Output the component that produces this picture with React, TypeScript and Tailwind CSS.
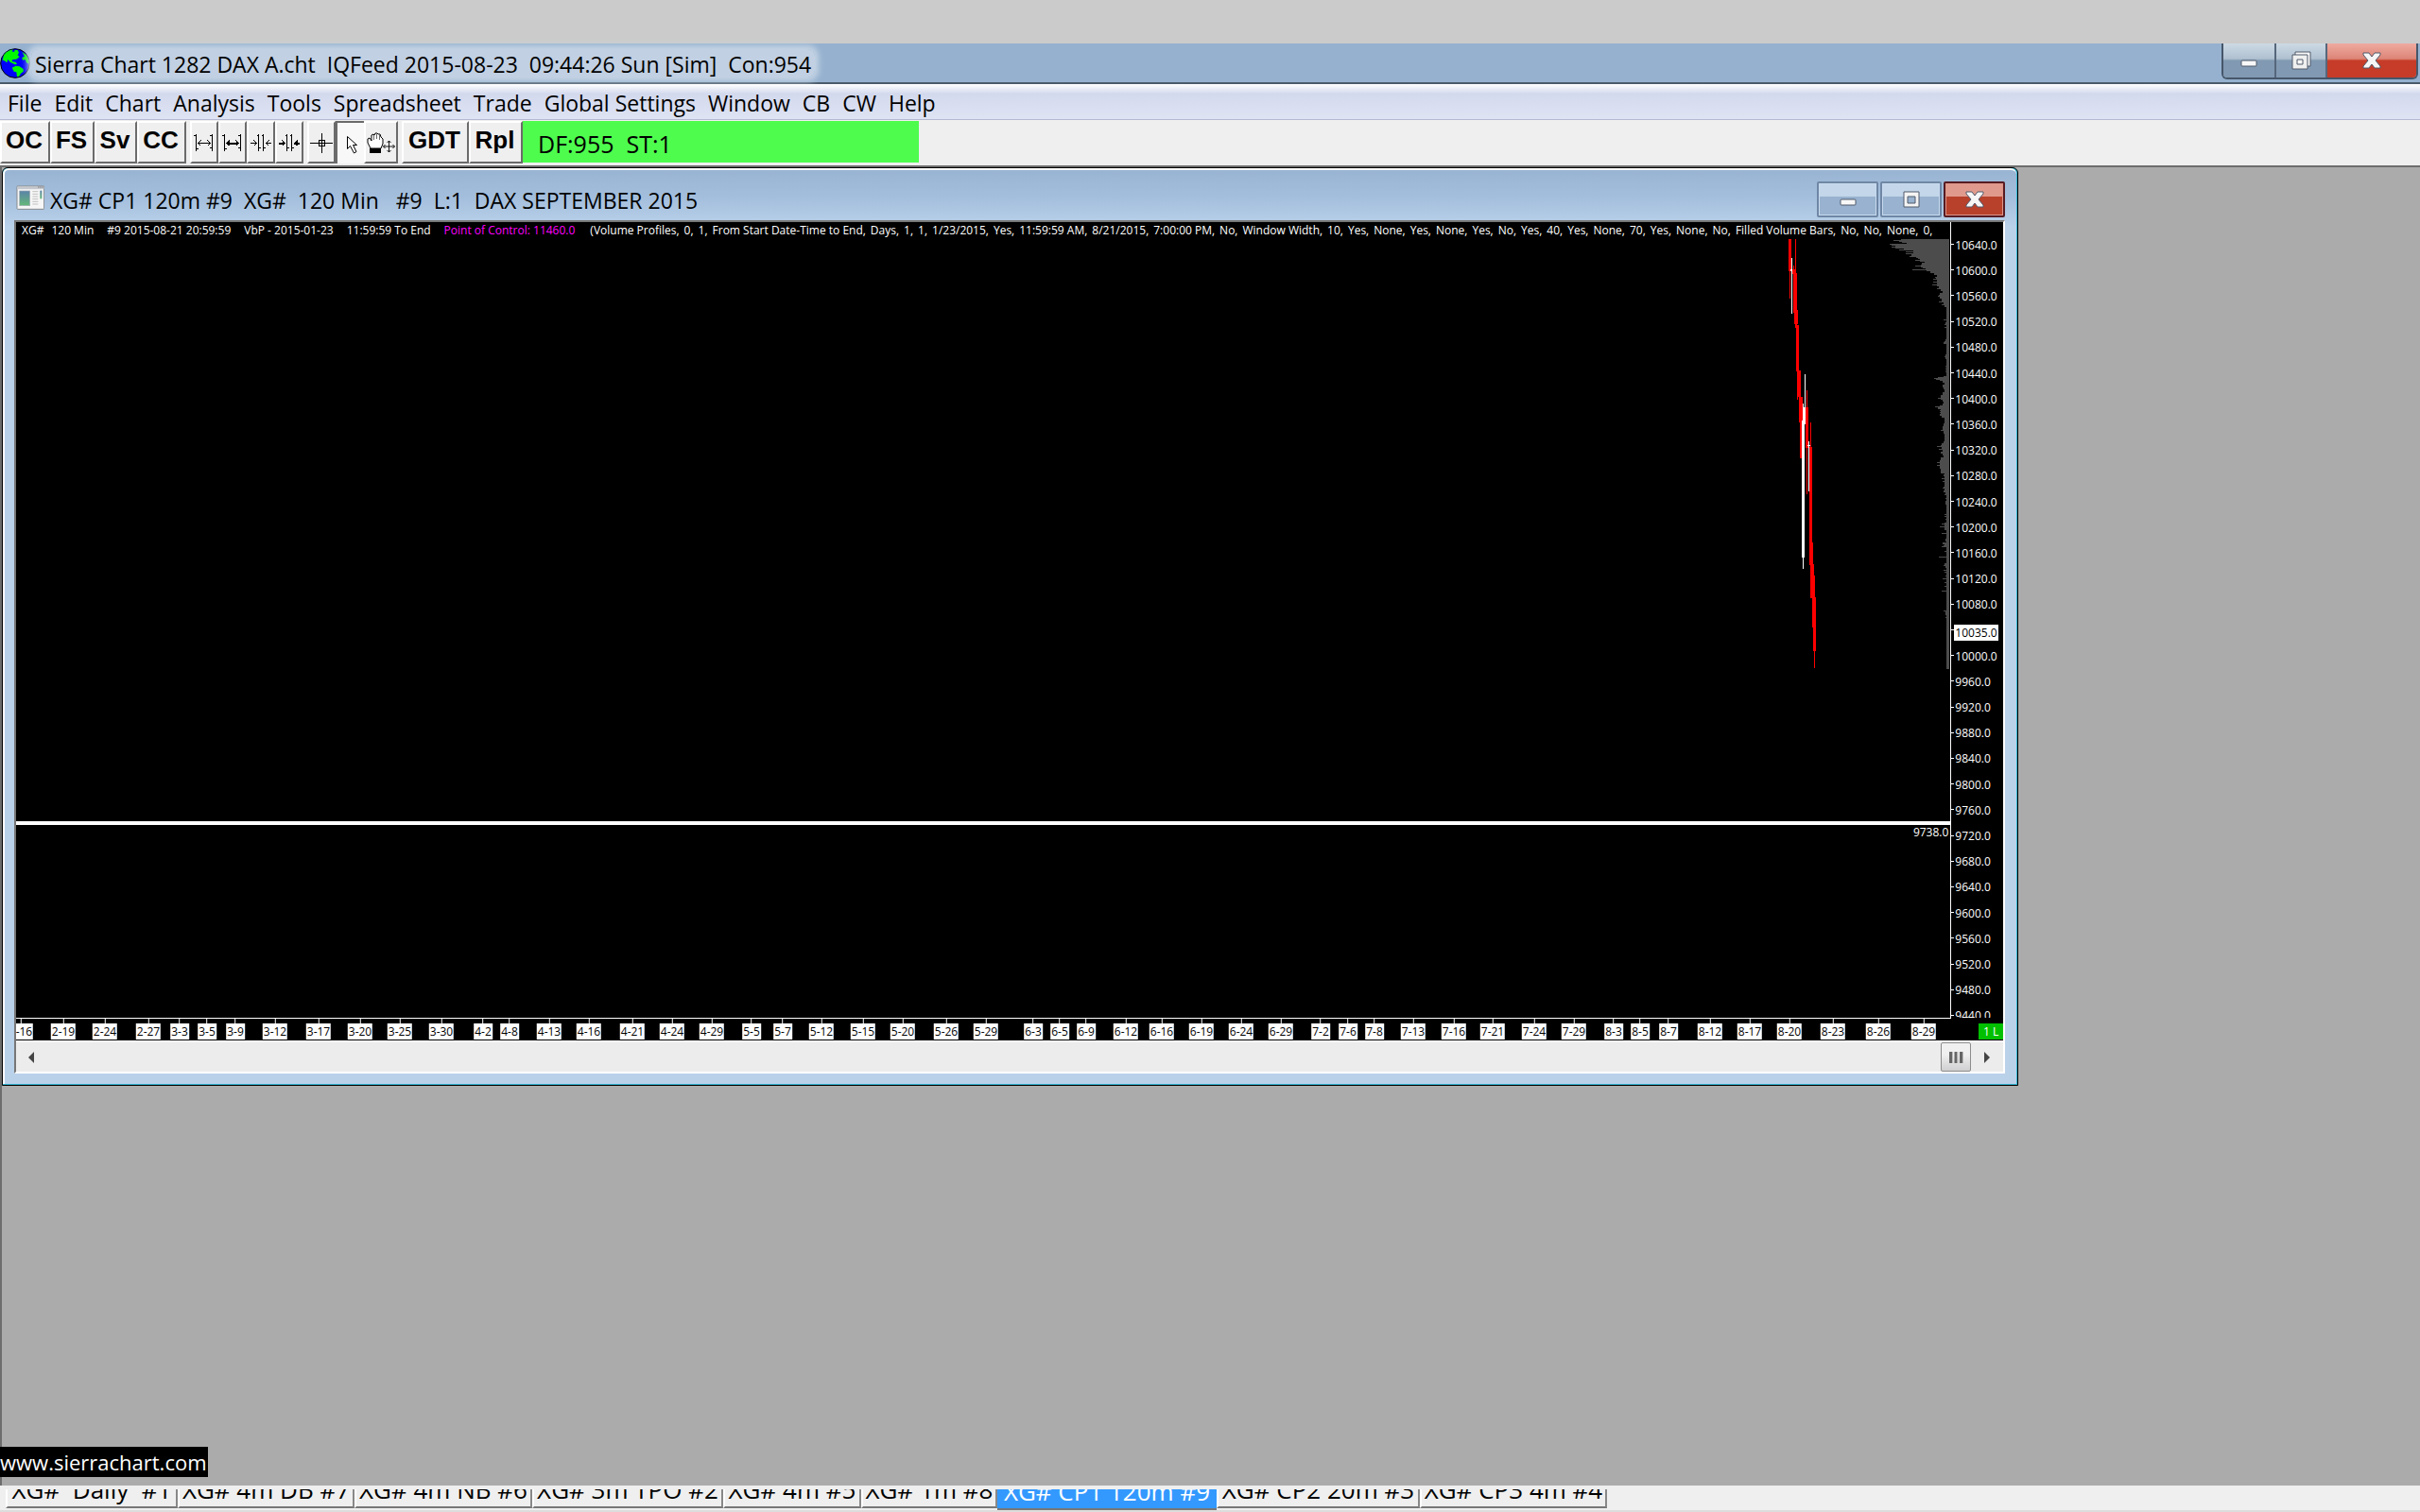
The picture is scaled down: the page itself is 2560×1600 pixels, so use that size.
import React from 'react';

const menus = ['File', 'Edit', 'Chart', 'Analysis', 'Tools', 'Spreadsheet', 'Trade', 'Global Settings', 'Window', 'CB', 'CW', 'Help'];

const prices = Array.from({ length: 31 }, (_, i) => 10640 - i * 40);

const studyInputs =
  '(Volume Profiles, 0, 1, From Start Date-Time to End, Days, 1, 1, 1/23/2015, Yes, 11:59:59 AM, 8/21/2015, 7:00:00 PM, No, Window Width, 10, Yes, None, Yes, None, Yes, No, Yes, 40, Yes, None, 70, Yes, None, No, Filled Volume Bars, No, No, None, 0,'.split(/(?<=,) /);

// Centre of every date label along the time axis, in pixels from the plot's left edge.
const dates: [string, number][] = [
  ['2-16', 5], ['2-19', 50], ['2-24', 94], ['2-27', 140], ['3-3', 173], ['3-5', 202], ['3-9', 232], ['3-12', 274],
  ['3-17', 320], ['3-20', 364], ['3-25', 406], ['3-30', 450], ['4-2', 494], ['4-8', 522], ['4-13', 564], ['4-16', 606],
  ['4-21', 652], ['4-24', 694], ['4-29', 736], ['5-5', 778], ['5-7', 811], ['5-12', 852], ['5-15', 896], ['5-20', 938],
  ['5-26', 984], ['5-29', 1026], ['6-3', 1076], ['6-5', 1104], ['6-9', 1132], ['6-12', 1174], ['6-16', 1212], ['6-19', 1254],
  ['6-24', 1296], ['6-29', 1338], ['7-2', 1380], ['7-6', 1409], ['7-8', 1437], ['7-13', 1478], ['7-16', 1521], ['7-21', 1562],
  ['7-24', 1606], ['7-29', 1648], ['8-3', 1690], ['8-5', 1718], ['8-7', 1748], ['8-12', 1792], ['8-17', 1834], ['8-20', 1876],
  ['8-23', 1922], ['8-26', 1970], ['8-29', 2018],
];

const tabs = ['XG#  Daily  #1', 'XG# 4m DB #7', 'XG# 4m NB #6', 'XG# 3m TPO #2', 'XG# 4m #5', 'XG# 1m #8', 'XG# CP1 120m #9', 'XG# CP2 20m #3', 'XG# CP3 4m #4'];
const tabWidths = ['w-[182px]', 'w-[187px]', 'w-[188px]', 'w-[202px]', 'w-[146px]', 'w-[144px]', 'w-[232px]', 'w-[215px]', 'w-[198px]'];

// [top, left edge] steps of the volume profile; each step holds until the next one.
const profile: [number, number][] = [
  [66, 452], [69, 430], [72, 448], [75, 456], [78, 470], [81, 417], [84, 423], [87, 436], [90, 424], [93, 434], [96, 462], [99, 447], [102, 492],
  [105, 468], [108, 492], [111, 468], [114, 487], [120, 480], [123, 500], [126, 508], [129, 514], [132, 498], [135, 512], [138, 528], [141, 520],
  [147, 517], [150, 498], [153, 517], [156, 522], [159, 532], [162, 489], [165, 535], [168, 545], [174, 557], [180, 567], [186, 560], [189, 565],
  [192, 555], [195, 567], [201, 555], [204, 567], [210, 552], [213, 566], [216, 572], [222, 568], [225, 578], [231, 585], [237, 576], [243, 573],
  [246, 570], [249, 577], [255, 583], [264, 573], [267, 588], [273, 583], [276, 592], [282, 597], [321, 588], [324, 597], [330, 593], [336, 590],
  [339, 597], [345, 591], [348, 597], [384, 594], [390, 590], [393, 588], [399, 597], [432, 594], [438, 591], [441, 594], [447, 597], [468, 594],
  [471, 597], [474, 594], [477, 597], [480, 594], [483, 597], [486, 594], [489, 597], [501, 588], [504, 570], [507, 558], [510, 564], [513, 575],
  [516, 586], [522, 590], [528, 586], [537, 588], [543, 590], [552, 585], [561, 580], [567, 578], [570, 570], [573, 578], [576, 586], [582, 588],
  [588, 585], [594, 576], [597, 561], [600, 570], [606, 580], [609, 576], [612, 580], [615, 576], [618, 580], [621, 576], [627, 582], [633, 590],
  [642, 592], [651, 588], [660, 586], [672, 579], [675, 588], [684, 590], [696, 592], [708, 588], [714, 583], [720, 579], [723, 567], [726, 582],
  [732, 572], [735, 585], [741, 579], [747, 584], [753, 588], [759, 580], [768, 576], [774, 567], [777, 575], [783, 567], [786, 576], [795, 580],
  [810, 592], [813, 588], [819, 591], [825, 582], [828, 590], [834, 585], [837, 591], [852, 588], [855, 584], [858, 591], [864, 588], [870, 594],
  [876, 591], [879, 597], [888, 594], [891, 597], [897, 594], [909, 597], [939, 590], [942, 597], [945, 592], [948, 597], [954, 594], [957, 597],
  [966, 590], [969, 583], [972, 590], [978, 576], [981, 591], [990, 597], [999, 582], [1002, 597], [1017, 594], [1026, 597], [1029, 585],
  [1035, 590], [1038, 588], [1041, 582], [1044, 597], [1056, 591], [1059, 597], [1074, 573], [1077, 597], [1095, 591], [1101, 588], [1104, 594],
  [1110, 597], [1116, 588], [1119, 597], [1122, 590], [1125, 597], [1134, 594], [1137, 597], [1143, 585], [1146, 597], [1155, 590], [1158, 597],
  [1167, 590], [1170, 597], [1182, 582], [1185, 597], [1245, 588], [1248, 594], [1260, 597], [1266, 594], [1269, 597],
];

const profilePath = `M606 66${profile.map(([y, x], i) => `V${y}H${x}V${i + 1 < profile.length ? profile[i + 1][0] : 1431}`).join('')}H606Z`;

// Candle bodies and wicks as [x, y, width, height].
const redBars: number[][] = [
  [96, 66, 9, 102], [99, 168, 3, 87], [108, 162, 12, 15], [111, 150, 3, 12], [117, 66, 3, 108], [111, 174, 12, 126], [114, 291, 12, 45],
  [117, 336, 6, 12], [120, 339, 9, 147], [123, 483, 12, 84], [123, 567, 3, 9], [129, 567, 12, 81], [132, 648, 6, 114], [150, 600, 9, 129],
  [153, 546, 3, 330], [162, 726, 9, 375], [165, 648, 3, 78], [165, 1029, 9, 177], [168, 1098, 9, 108], [171, 1134, 9, 165],
  [174, 1203, 9, 171], [177, 1374, 3, 54],
];
const whiteBars: number[][] = [
  [105, 126, 3, 177], [102, 162, 6, 6], [138, 642, 9, 435], [141, 588, 3, 525], [141, 600, 9, 42], [147, 495, 3, 159],
  [159, 708, 3, 159], [156, 720, 9, 3],
];

function Bars({ bars, fill }: { bars: number[][]; fill: string }) {
  return (
    <g fill={fill}>
      {bars.map(([x, y, w, h]) => <rect key={`${x}-${y}`} x={x} y={y} width={w} height={h} />)}
    </g>
  );
}

function Globe() {
  return (
    <svg className="h-8 w-8 shrink-0" viewBox="0 0 96 96" aria-hidden="true">
      <circle cx="48" cy="48" r="46" fill="#0000f8" stroke="#000" strokeWidth="3" />
      <path d="M12 22L20 13 34 5H42L37 10 45 12 47 6 56 6 60 14 56 22 62 28 52 35 40 36 38 42 50 44 54 50 48 52 40 48 33 45 25 36 22 46 14 40 8 38Z" fill="#00f800" />
      <path d="M38 62L50 56 62 58 74 66 74 74 66 80 60 90 54 90 52 76 44 74Z" fill="#00f800" />
      <path d="M70 12L84 22 92 38 92 50 84 46 80 36 72 38 70 30 78 26Z" fill="#00f800" />
    </svg>
  );
}

function WindowIcon() {
  return (
    <svg className="ml-0.5 h-[26px] w-[30px] shrink-0" viewBox="0 0 90 78" aria-hidden="true">
      <defs>
        <linearGradient id="pane" x1="0" y1="0" x2="0" y2="1">
          <stop offset="0" stopColor="#5b83a8" />
          <stop offset="1" stopColor="#64b878" />
        </linearGradient>
      </defs>
      <rect x="3" y="3" width="86" height="73" rx="2" fill="#f6f6f6" stroke="#85888c" strokeWidth="3" />
      <path d="M3 9H88" stroke="#c4c8ce" strokeWidth="7" />
      <path d="M70 6h3m3 0h3m3 0h3" stroke="#555" strokeWidth="3" />
      <rect x="11" y="18" width="33" height="47" fill="url(#pane)" stroke="#a4adb8" strokeWidth="2" />
      <path d="M52 20H70M52 28H70M52 36H70M52 44H70M52 52H70M52 60H70" stroke="#c0c0c0" strokeWidth="3" />
      <rect x="76" y="17" width="6" height="26" fill="url(#pane)" />
    </svg>
  );
}

function MinimizeGlyph() {
  return (
    <svg className="h-6 w-6" viewBox="0 0 24 24" aria-hidden="true">
      <rect x="4" y="12" width="16" height="6" rx="1" fill="#f8f8f8" stroke="#515a6b" strokeWidth="1" />
    </svg>
  );
}
function MaximizeGlyph() {
  return (
    <svg className="h-6 w-6" viewBox="0 0 24 24" aria-hidden="true">
      <path fillRule="evenodd" d="M4 4h16v16H4zM8 9h8v7H8z" fill="#f4f4f4" stroke="#515a6b" strokeWidth="1" />
    </svg>
  );
}
function RestoreGlyph() {
  return (
    <svg className="h-6 w-6" viewBox="0 0 24 24" aria-hidden="true">
      <path d="M6 3h16v15H6z" fill="#f8f8f8" stroke="#515a6b" strokeWidth="1" />
      <path fillRule="evenodd" d="M3 6h16v15H3zM8 11h6v5H8z" fill="#f0f0f0" stroke="#515a6b" strokeWidth="1" />
    </svg>
  );
}
function CloseGlyph() {
  return (
    <svg className="h-6 w-6" viewBox="0 0 24 24" aria-hidden="true">
      <path d="M3 4h6l3 4 3-4h6v2l-5 6 5 6v2h-6l-3-4-3 4H3v-2l5-6-5-6z" fill="#f6f6f6" stroke="#515a6b" strokeWidth="1" />
    </svg>
  );
}

function BarSpacing({ kind }: { kind: number }) {
  return (
    <svg className="h-6 w-6" viewBox="0 0 24 24" fill="none" stroke="#000" strokeWidth="1" shapeRendering="crispEdges" aria-hidden="true">
      {kind < 2 ? (
        <>
          <path d="M1 4.500h2M3.500 3v18M4 18.500h2M18 4.500h2M20.500 3v18M18 17.500h2" />
          <path d="M6 12.500h12" strokeWidth={kind === 1 ? 2 : 1} />
          <path d="M8.500 9.500l-3 3 3 3M15.500 9.500l3 3-3 3" fill={kind === 1 ? '#000' : 'none'} />
        </>
      ) : (
        <>
          <path d="M8 4.500h2M9.500 3v18M10 17.500h2M13 4.500h2M14.500 3v18M15 17.500h2" />
          <path d="M1 12.500h6M17 12.500h6" strokeWidth={kind === 3 ? 2 : 1} />
          <path d="M4.500 9.500l3 3-3 3M20.500 9.500l-3 3 3 3" fill={kind === 3 ? '#000' : 'none'} />
        </>
      )}
    </svg>
  );
}

function Crosshair() {
  return (
    <svg className="h-6 w-6" viewBox="0 0 24 24" fill="none" stroke="#000" shapeRendering="crispEdges" aria-hidden="true">
      <path d="M0 12.500h24M12.500 2v21" />
      <rect x="9.500" y="9.500" width="6" height="6" />
    </svg>
  );
}
function Pointer() {
  return (
    <svg className="h-6 w-6" viewBox="0 0 24 24" aria-hidden="true">
      <path d="M8.500 4.500v13l3-3 4 7.500 2.500-1.500-3.500-7h4z" fill="#fff" stroke="#000" />
    </svg>
  );
}
function Hand() {
  return (
    <svg className="h-6 w-[30px]" viewBox="0 0 30 24" aria-hidden="true">
      <path d="M4 18L1 12V8l2-1 2 3V4l2-1 1 1 1-2h2l1 1 2 0 1 3 2 2v5l-2 5z" fill="#fff" stroke="#000" />
      <path d="M7.500 4v5M10.500 3v5M13.500 4v5" stroke="#000" strokeWidth="0.600" />
      <rect x="3" y="18" width="12" height="5" fill="#000" />
      <path d="M23.500 10v12M17.500 16h12M21.500 12l2-2 2 2M21.500 20l2 2 2-2M19.500 14l-2 2 2 2M27.500 14l2 2-2 2" fill="none" stroke="#000" strokeWidth="0.900" />
    </svg>
  );
}

const raised = 'flex h-[45px] items-center justify-center border-2 border-t-white border-l-white border-r-[#6b6b6b] border-b-[#6b6b6b] bg-[#efefef] ';

function TextButton({ label, width }: { label: string; width: string }) {
  return (
    <button className={`${raised} ${width} pr-0.5 pb-1.5 font-['Liberation_Sans',sans-serif] text-[26px] leading-none font-bold`}>{label}</button>
  );
}
function IconButton({ label, width, children }: { label: string; width: string; children: React.ReactNode }) {
  return <button aria-label={label} className={`${raised} ${width}`}>{children}</button>;
}

function Price({ value }: { value: number }) {
  return (
    <div className="flex min-h-0 items-center">
      <span className="h-px w-[3px] bg-white" />
      {value === 10040 ? (
        <mark className="mt-1.5 bg-white px-px leading-[17px] text-black">10035.0</mark>
      ) : (
        <span className="pt-0.5 pl-px leading-4">{value.toFixed(1)}</span>
      )}
    </div>
  );
}

function ChartWindow() {
  return (
    <section className="w-[83.400%] rounded-t-md border border-black bg-[#35b6d1] pr-px pb-px font-['Open_Sans',sans-serif]">
      <div className="rounded-t-md border-t-2 border-l-2 border-white bg-[#bad1ea] bg-linear-to-b from-[#98b4d2] via-[#a4bfdd] to-[#bad1ea] bg-[length:100%_60px] bg-no-repeat pr-3 pb-[11px] pl-2.5">
        <header className="flex h-[53px] items-center pt-1">
          <WindowIcon />
          <h2 className="flex-1 pt-1.5 pl-1.5 text-[23px] leading-8 whitespace-pre">{'XG# CP1 120m #9  XG#  120 Min   #9  L:1  DAX SEPTEMBER 2015'}</h2>
          <div className="flex gap-0.5 self-start pt-2">
            <button aria-label="Minimize chart" className="flex h-[38px] w-[65px] items-center justify-center rounded-xs border-2 border-[#6f87a5] bg-linear-to-b from-[#c3d6ea] from-40% to-[#98b2cf] to-41% shadow-[inset_0_0_0_1px_#c8daee]"><MinimizeGlyph /></button>
            <button aria-label="Maximize chart" className="flex h-[38px] w-[65px] items-center justify-center rounded-xs border-2 border-[#6f87a5] bg-linear-to-b from-[#c3d6ea] from-40% to-[#98b2cf] to-41% shadow-[inset_0_0_0_1px_#c8daee]"><MaximizeGlyph /></button>
            <button aria-label="Close chart" className="flex h-[38px] w-[65px] items-center justify-center rounded-xs border-2 border-[#571b22] bg-linear-to-b from-[#e09a8d] from-40% to-[#b8412c] to-41% shadow-[inset_0_0_0_1px_#dd9488]"><CloseGlyph /></button>
          </div>
        </header>

        <div className="border-2 border-t-[#777] border-r-white border-b-white border-l-[#777] bg-black text-[12px] text-white">
          <div className="flex h-[843px] overflow-hidden">
            <div className="flex min-w-0 flex-1 flex-col border-r border-b border-white">
              <div className="flex overflow-hidden pl-1.5 leading-[18px] whitespace-pre">
                <span className="flex gap-3.5 pr-4">
                  <span className="flex gap-2">
                    <span>XG#</span>
                    <span>120 Min</span>
                  </span>
                  <span>#9 2015-08-21 20:59:59</span>
                  <span>VbP - 2015-01-23</span>
                  <span>11:59:59 To End</span>
                  <span className="text-[#f0f]">Point of Control: 11460.0</span>
                </span>
                <span className="flex gap-[5px]">
                  {studyInputs.map((s, i) => <span key={i}>{s}</span>)}
                </span>
              </div>
              <div className="flex h-[616px] justify-end">
                <svg className="h-[456px] w-[203px]" viewBox="0 66 609 1368" shapeRendering="crispEdges" role="img" aria-label="DAX price bars and volume profile">
                  <path d={profilePath} fill="#4c4c4c" />
                  <Bars bars={redBars} fill="#f00" />
                  <Bars bars={whiteBars} fill="#fff" />
                </svg>
              </div>
              <div className="h-1 bg-white" />
              <p className="pr-0.5 text-right leading-4">9738.0</p>
            </div>
            <div className="h-[842px] w-[55px] overflow-hidden pt-2.5">
              <div className="grid h-[843px] grid-rows-[repeat(31,minmax(0,1fr))]">
                {prices.map((p) => <Price key={p} value={p} />)}
              </div>
            </div>
          </div>
          <div className="relative h-[23px] overflow-hidden">
            {dates.map(([d, x]) => (
              <div key={d} className="absolute top-0 flex -translate-x-1/2 flex-col items-center" style={{ left: x }}>
                <span className="h-[5px] w-px bg-white" />
                <span className="bg-white px-px leading-[17px] text-black">{d}</span>
              </div>
            ))}
            <span className="absolute top-[5px] right-0 bg-[#00c000] px-[5px] leading-[17px]">1 L</span>
          </div>
          <div className="flex h-[33px] items-stretch border-t-2 border-[#fafafa] bg-[#ececec]">
            <button aria-label="Scroll left" className="flex w-8 items-center justify-center">
              <svg className="h-3 w-1.5" viewBox="0 0 6 12" aria-hidden="true"><path d="M6 0v12L0 6z" fill="#444" /></svg>
            </button>
            <div className="flex flex-1 justify-end">
              <button aria-label="Scroll position" className="flex w-8 items-center justify-center rounded-xs border border-[#8c8c8c] bg-linear-to-b from-[#f0f0f0] from-40% to-[#cfcfd1]">
                <svg className="h-3 w-4" viewBox="0 0 16 12" aria-hidden="true"><path d="M2.500 0v12M8 0v12M13.500 0v12" stroke="#666" strokeWidth="3" /><path d="M4.500 0v12M10 0v12M15.500 0v12" stroke="#bbb" /></svg>
              </button>
            </div>
            <button aria-label="Scroll right" className="flex w-[34px] items-center justify-center">
              <svg className="h-3 w-1.5" viewBox="0 0 6 12" aria-hidden="true"><path d="M0 0v12L6 6z" fill="#444" /></svg>
            </button>
          </div>
        </div>
      </div>
    </section>
  );
}

export default function App() {
  return (
    <main className="flex min-h-screen flex-col bg-[#cbcbcb] pt-[46px] font-['Open_Sans',sans-serif] text-black">
      <header className="flex h-[43px] items-center border-b-2 border-[#4b5b6c] bg-[#95b1cf]">
        <Globe />
        <h1 className="ml-px rounded-lg bg-[#c5d4e4]/90 pt-0.5 pr-1 pl-1 text-[23px] leading-[28px] whitespace-pre shadow-[0_0_6px_4px_#c5d4e4]">{'Sierra Chart 1282 DAX A.cht  IQFeed 2015-08-23  09:44:26 Sun [Sim]  Con:954'}</h1>
        <div className="mr-0.5 ml-auto flex self-start overflow-hidden rounded-b-md border-2 border-t-0 border-[#46566a]">
          <button aria-label="Minimize" className="flex h-9 w-[56px] items-center justify-center border-r-2 border-[#56677c] bg-linear-to-b from-[#cddae5] via-[#afc0d0] via-45% to-[#8199b2] to-50%"><MinimizeGlyph /></button>
          <button aria-label="Restore" className="flex h-9 w-[54px] items-center justify-center border-r-2 border-[#56677c] bg-linear-to-b from-[#cddae5] via-[#afc0d0] via-45% to-[#8199b2] to-50%"><RestoreGlyph /></button>
          <button aria-label="Close" className="flex h-9 w-[94px] items-center justify-center bg-linear-to-b from-[#efaaa0] via-[#dc8577] via-45% to-[#c63c28] to-50%"><CloseGlyph /></button>
        </div>
      </header>

      <nav className="flex h-[38px] items-center gap-[13px] border-b border-[#b4b9d2] bg-linear-to-b from-white via-[#d3d9ed] via-28% to-[#dfe4f4] pt-0.5 pl-2 text-[23px]">
        {menus.map((m) => <button key={m} className="leading-7 whitespace-nowrap">{m}</button>)}
      </nav>

      <div className="flex h-[48px] items-start bg-[#efefef] pt-px">
        <TextButton label="OC" width="w-[53px]" />
        <TextButton label="FS" width="w-[47px]" />
        <TextButton label="Sv" width="w-[45px]" />
        <TextButton label="CC" width="w-[52px]" />
        <div className="ml-1 flex">
          <IconButton label="Increase bar spacing" width="w-[30px]"><BarSpacing kind={0} /></IconButton>
          <IconButton label="Increase bar width" width="w-[30px]"><BarSpacing kind={1} /></IconButton>
          <IconButton label="Decrease bar spacing" width="w-[30px]"><BarSpacing kind={2} /></IconButton>
          <IconButton label="Decrease bar width" width="w-[30px]"><BarSpacing kind={3} /></IconButton>
        </div>
        <div className="ml-1 flex">
          <IconButton label="Chart values" width="w-[30px]"><Crosshair /></IconButton>
          <button aria-label="Pointer" aria-pressed="true" className="flex h-[45px] w-[30px] items-center justify-center border-t-2 border-l-2 border-[#6b6b6b] bg-[#f8f8f8]"><Pointer /></button>
          <IconButton label="Hand" width="w-[36px]"><Hand /></IconButton>
        </div>
        <div className="ml-1 flex">
          <TextButton label="GDT" width="w-[71px]" />
          <TextButton label="Rpl" width="w-[57px]" />
        </div>
        <output className="h-[44px] w-[419px] bg-[#4efc4e] pl-4 text-[25px] leading-[48px] whitespace-pre">DF:955  ST:1</output>
      </div>

      <div className="flex flex-1 flex-col justify-between border-t-2 border-l-2 border-[#6d6d6d] bg-[#ababab]">
        <ChartWindow />
        <a href="#sierrachart" className="mb-[9px] -ml-0.5 self-start bg-black pr-px text-[22px] leading-8 text-white">www.sierrachart.com</a>
      </div>

      <nav className="flex h-7 items-start border-b-2 border-[#dcdcdc] bg-[#efefef] pt-1 pl-1.5">
        {tabs.map((t, i) => (
          <button
            key={t}
            aria-current={t.includes('CP1') ? 'page' : undefined}
            className={`${tabWidths[i]} flex items-end justify-center overflow-hidden border-b-2 text-[26px] leading-9 whitespace-pre ${t.includes('CP1') ? 'h-[22px] border-[#777] bg-[#3399ff] text-white' : 'h-5 border-r-2 border-l-2 border-r-[#888] border-b-[#777] border-l-white'}`}
          >
            {t}
          </button>
        ))}
      </nav>
    </main>
  );
}
